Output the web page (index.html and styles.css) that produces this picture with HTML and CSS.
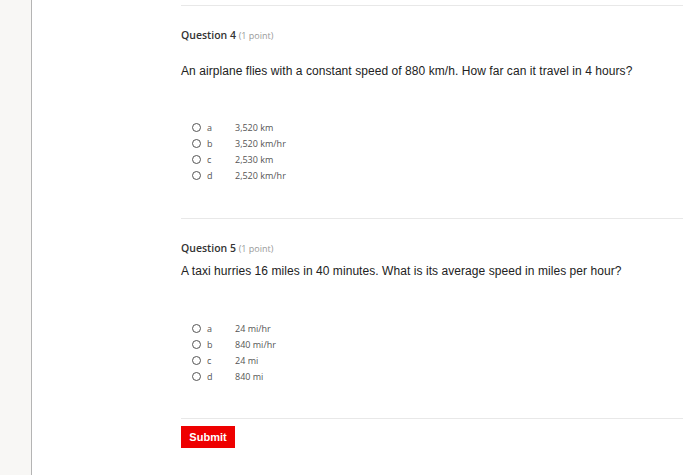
FILE: index.html
```html
<!DOCTYPE html>
<html>
<head>
<meta charset="utf-8">
<link rel="stylesheet" href="styles.css">
</head>
<body>
<div class="page">
  <aside class="sidebar"></aside>
  <main class="main">
    <div class="rule rule-top"></div>
    <section class="question q4">
      <h3 class="q-title">Question 4 <span class="points">(1 point)</span></h3>
      <p class="q-text">An airplane flies with a constant speed of 880 km/h. How far can it travel in 4 hours?</p>
      <ul class="options">
        <li class="option"><span class="radio"></span><span class="letter">a</span><span class="answer">3,520 km</span></li>
        <li class="option"><span class="radio"></span><span class="letter">b</span><span class="answer">3,520 km/hr</span></li>
        <li class="option"><span class="radio"></span><span class="letter">c</span><span class="answer">2,530 km</span></li>
        <li class="option"><span class="radio"></span><span class="letter">d</span><span class="answer">2,520 km/hr</span></li>
      </ul>
    </section>
    <div class="rule"></div>
    <section class="question q5">
      <h3 class="q-title">Question 5 <span class="points">(1 point)</span></h3>
      <p class="q-text">A taxi hurries 16 miles in 40 minutes. What is its average speed in miles per hour?</p>
      <ul class="options">
        <li class="option"><span class="radio"></span><span class="letter">a</span><span class="answer">24 mi/hr</span></li>
        <li class="option"><span class="radio"></span><span class="letter">b</span><span class="answer">840 mi/hr</span></li>
        <li class="option"><span class="radio"></span><span class="letter">c</span><span class="answer">24 mi</span></li>
        <li class="option"><span class="radio"></span><span class="letter">d</span><span class="answer">840 mi</span></li>
      </ul>
    </section>
    <div class="rule"></div>
    <div class="actions">
      <button class="submit">Submit</button>
    </div>
  </main>
</div>
</body>
</html>
```

FILE: styles.css
```css
html, body {
  margin: 0;
  padding: 0;
  background: #ffffff;
}

.page {
  display: flex;
  min-height: 475px;
}

.sidebar {
  width: 31px;
  flex: 0 0 31px;
  background: #f8f7f5;
  border-right: 1px solid #b4b4b4;
}

.main {
  flex: 1;
  padding-left: 149px;
  padding-top: 5px;
}

.rule {
  height: 1px;
  background: #e8e8e8;
}

.question {
  padding-top: 22px;
}

.q-title {
  margin: 0;
  font-family: "Open Sans", sans-serif;
  font-weight: 600;
  font-size: 10.5px;
  line-height: 15px;
  color: #333333;
}

.points {
  font-weight: 400;
  font-size: 9px;
  color: #999999;
}

.q-text {
  margin: 0;
  font-family: "Liberation Sans", Arial, sans-serif;
  font-size: 12px;
  line-height: 15px;
  letter-spacing: 0.06px;
  color: #222222;
}

.q4 .q-text {
  margin-top: 21px;
}

.q5 .q-text {
  margin-top: 8px;
}

.options {
  list-style: none;
  margin: 40px 0 35px 0;
  padding: 0 0 0 11px;
}

.q5 .options {
  margin-top: 41px;
  margin-bottom: 34px;
}

.option {
  display: flex;
  align-items: center;
  height: 16px;
  font-family: "Open Sans", sans-serif;
  font-size: 9px;
  color: #555555;
}

.radio {
  width: 7px;
  height: 7px;
  border: 1px solid #555555;
  border-radius: 50%;
  box-sizing: content-box;
  margin-right: 6px;
}

.letter {
  width: 28px;
}

.actions {
  padding-top: 7px;
}

.submit {
  background: #ee0000;
  color: #ffffff;
  border: none;
  font-family: "Liberation Sans", Arial, sans-serif;
  font-weight: 700;
  font-size: 11px;
  width: 54px;
  height: 22px;
  padding: 0;
  cursor: pointer;
}
```
